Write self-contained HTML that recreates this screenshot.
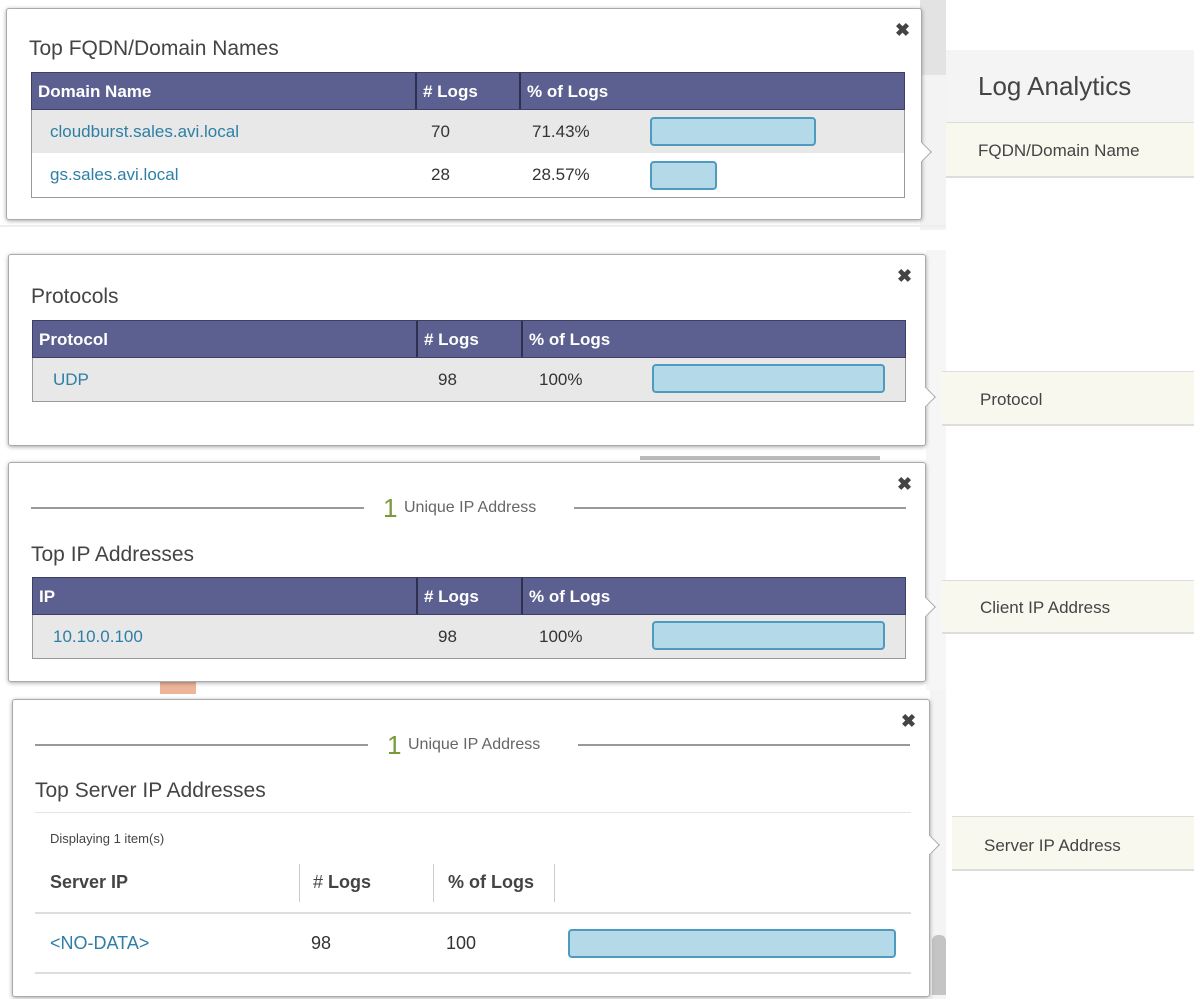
<!DOCTYPE html>
<html><head><meta charset="utf-8"><style>
*{margin:0;padding:0;box-sizing:border-box}
body{width:1194px;height:999px;position:relative;background:#fff;font-family:"Liberation Sans",sans-serif;overflow:hidden;color:#333}
.a{position:absolute}
.box{position:absolute;background:#fff;border:1px solid #aaa;border-radius:3px;box-shadow:0 1px 4px rgba(0,0,0,.35)}
.ttl{position:absolute;font-size:21px;color:#444}
.x{position:absolute;font-size:18px;font-weight:bold;color:#444}
.hd{position:absolute;background:#5c6090;border:1px solid #3d3f66;color:#fff;font-weight:bold;font-size:17px}
.hd span{position:absolute;top:9px}
.sep{position:absolute;top:0;bottom:0;width:2px;background:#2f3050}
.row{position:absolute;font-size:17px}
.row span{position:absolute}
.lk{color:#2e7fa6}
.bar{position:absolute;background:#b4d9e8;border:2px solid #4e9bbf;border-radius:4px}
.rt{position:absolute;background:#f8f8ee;border-top:1px solid #ddd;border-bottom:2px solid #ddd;font-size:17px;color:#444;left:0}
.ul{position:absolute;height:2px;background:#999}
.arr{position:absolute;width:14px;height:14px;background:#fff;border-right:1px solid #aaa;border-top:1px solid #aaa;transform:rotate(45deg)}
</style></head><body>
<div class="a" style="left:920px;top:0;width:26px;height:230px;background:#f3f3f3"></div>
<div class="a" style="left:920px;top:0;width:26px;height:75px;background:#e3e3e3"></div>
<div class="a" style="left:926px;top:250px;width:20px;height:440px;background:#f6f6f6"></div>
<div class="a" style="left:930px;top:690px;width:16px;height:309px;background:#f4f4f4"></div>
<div class="a" style="left:932px;top:935px;width:14px;height:60px;background:#c4c4c4;border-radius:6px 6px 0 0"></div>
<div class="a" style="left:0;top:445px;width:890px;height:15px;background:#fff"></div>
<div class="a" style="left:640px;top:456px;width:240px;height:4px;background:#bbb"></div>
<div class="a" style="left:160px;top:682px;width:36px;height:12px;background:#eeb49a"></div>
<div class="a" style="left:0;top:225px;width:946px;height:2px;background:#eee"></div>

<div class="a" style="left:946px;top:50px;width:248px;height:72px;background:#f4f4f4"></div>
<div class="a" style="left:978px;top:71px;font-size:26px;color:#444">Log Analytics</div>
<div class="rt" style="left:946px;top:122px;width:248px;height:56px"><span class="a" style="left:32px;top:18px">FQDN/Domain Name</span></div>
<div class="rt" style="left:942px;top:371px;width:252px;height:55px"><span class="a" style="left:38px;top:18px">Protocol</span></div>
<div class="rt" style="left:942px;top:580px;width:252px;height:54px"><span class="a" style="left:38px;top:17px">Client IP Address</span></div>
<div class="rt" style="left:952px;top:816px;width:242px;height:55px"><span class="a" style="left:32px;top:19px">Server IP Address</span></div>

<div class="box" style="left:6px;top:8px;width:916px;height:212px">
<div class="arr" style="left:908px;top:136px"></div>
<div class="x" style="left:888px;top:11px">✖</div>
<div class="ttl" style="left:22px;top:28px">Top FQDN/Domain Names</div>
<div class="hd" style="left:24px;top:63px;width:874px;height:38px"><span style="left:6px">Domain Name</span><div class="sep" style="left:383px"></div><span style="left:391px"># Logs</span><div class="sep" style="left:487px"></div><span style="left:495px">% of Logs</span></div>
<div class="a" style="left:24px;top:101px;width:874px;height:88px;border:1px solid #999;border-top:none"></div>
<div class="row" style="left:25px;top:101px;width:872px;height:43px;background:#e7e8e7"><span class="lk" style="left:18px;top:12px">cloudburst.sales.avi.local</span><span style="left:399px;top:12px">70</span><span style="left:500px;top:12px">71.43%</span></div>
<div class="bar" style="left:643px;top:108px;width:166px;height:29px"></div>
<div class="row" style="left:25px;top:144px;width:872px;height:44px"><span class="lk" style="left:18px;top:12px">gs.sales.avi.local</span><span style="left:399px;top:12px">28</span><span style="left:500px;top:12px">28.57%</span></div>
<div class="bar" style="left:643px;top:152px;width:67px;height:29px"></div>
</div>

<div class="box" style="left:8px;top:254px;width:918px;height:192px">
<div class="arr" style="left:910px;top:135px"></div>
<div class="x" style="left:888px;top:11px">✖</div>
<div class="ttl" style="left:22px;top:30px">Protocols</div>
<div class="hd" style="left:23px;top:65px;width:874px;height:38px"><span style="left:6px">Protocol</span><div class="sep" style="left:383px"></div><span style="left:391px"># Logs</span><div class="sep" style="left:488px"></div><span style="left:496px">% of Logs</span></div>
<div class="row" style="left:23px;top:103px;width:874px;height:44px;background:#e7e8e7;border:1px solid #999;border-top:none"><span class="lk" style="left:20px;top:12px">UDP</span><span style="left:405px;top:12px">98</span><span style="left:506px;top:12px">100%</span></div>
<div class="bar" style="left:643px;top:109px;width:233px;height:29px"></div>
</div>

<div class="box" style="left:8px;top:462px;width:918px;height:220px">
<div class="arr" style="left:910px;top:137px"></div>
<div class="x" style="left:888px;top:11px">✖</div>
<div class="ul" style="left:22px;top:44px;width:333px"></div>
<div class="a" style="left:374px;top:30px;font-size:26px;color:#7a9a3a">1</div>
<div class="a" style="left:395px;top:36px;font-size:16px;color:#666">Unique IP Address</div>
<div class="ul" style="left:565px;top:44px;width:332px"></div>
<div class="ttl" style="left:22px;top:80px">Top IP Addresses</div>
<div class="hd" style="left:23px;top:114px;width:874px;height:38px"><span style="left:6px">IP</span><div class="sep" style="left:383px"></div><span style="left:391px"># Logs</span><div class="sep" style="left:488px"></div><span style="left:496px">% of Logs</span></div>
<div class="row" style="left:23px;top:152px;width:874px;height:44px;background:#e7e8e7;border:1px solid #999;border-top:none"><span class="lk" style="left:20px;top:12px">10.10.0.100</span><span style="left:405px;top:12px">98</span><span style="left:506px;top:12px">100%</span></div>
<div class="bar" style="left:643px;top:158px;width:233px;height:29px"></div>
</div>

<div class="box" style="left:12px;top:699px;width:918px;height:298px">
<div class="arr" style="left:910px;top:138px"></div>
<div class="x" style="left:888px;top:11px">✖</div>
<div class="ul" style="left:22px;top:44px;width:333px"></div>
<div class="a" style="left:374px;top:30px;font-size:26px;color:#7a9a3a">1</div>
<div class="a" style="left:395px;top:36px;font-size:16px;color:#666">Unique IP Address</div>
<div class="ul" style="left:565px;top:44px;width:332px"></div>
<div class="ttl" style="left:22px;top:79px">Top Server IP Addresses</div>
<div class="a" style="left:22px;top:112px;width:876px;height:1px;background:#e4e4e4"></div>
<div class="a" style="left:37px;top:131px;font-size:13px;color:#444">Displaying 1 item(s)</div>
<div class="a" style="left:37px;top:172px;font-size:18px;font-weight:bold;color:#444">Server IP</div>
<div class="a" style="left:286px;top:164px;width:1px;height:38px;background:#ccc"></div>
<div class="a" style="left:300px;top:172px;font-size:18px;color:#444"><b style="font-weight:normal">#</b> <b>Logs</b></div>
<div class="a" style="left:420px;top:164px;width:1px;height:38px;background:#ccc"></div>
<div class="a" style="left:435px;top:172px;font-size:18px;font-weight:bold;color:#444">% of Logs</div>
<div class="a" style="left:541px;top:164px;width:1px;height:38px;background:#ccc"></div>
<div class="a" style="left:22px;top:212px;width:876px;height:2px;background:#ddd"></div>
<div class="a lk" style="left:37px;top:233px;font-size:18px">&lt;NO-DATA&gt;</div>
<div class="a" style="left:298px;top:233px;font-size:18px">98</div>
<div class="a" style="left:433px;top:233px;font-size:18px">100</div>
<div class="bar" style="left:555px;top:229px;width:328px;height:29px"></div>
<div class="a" style="left:22px;top:272px;width:876px;height:2px;background:#ddd"></div>
</div>
</body></html>
